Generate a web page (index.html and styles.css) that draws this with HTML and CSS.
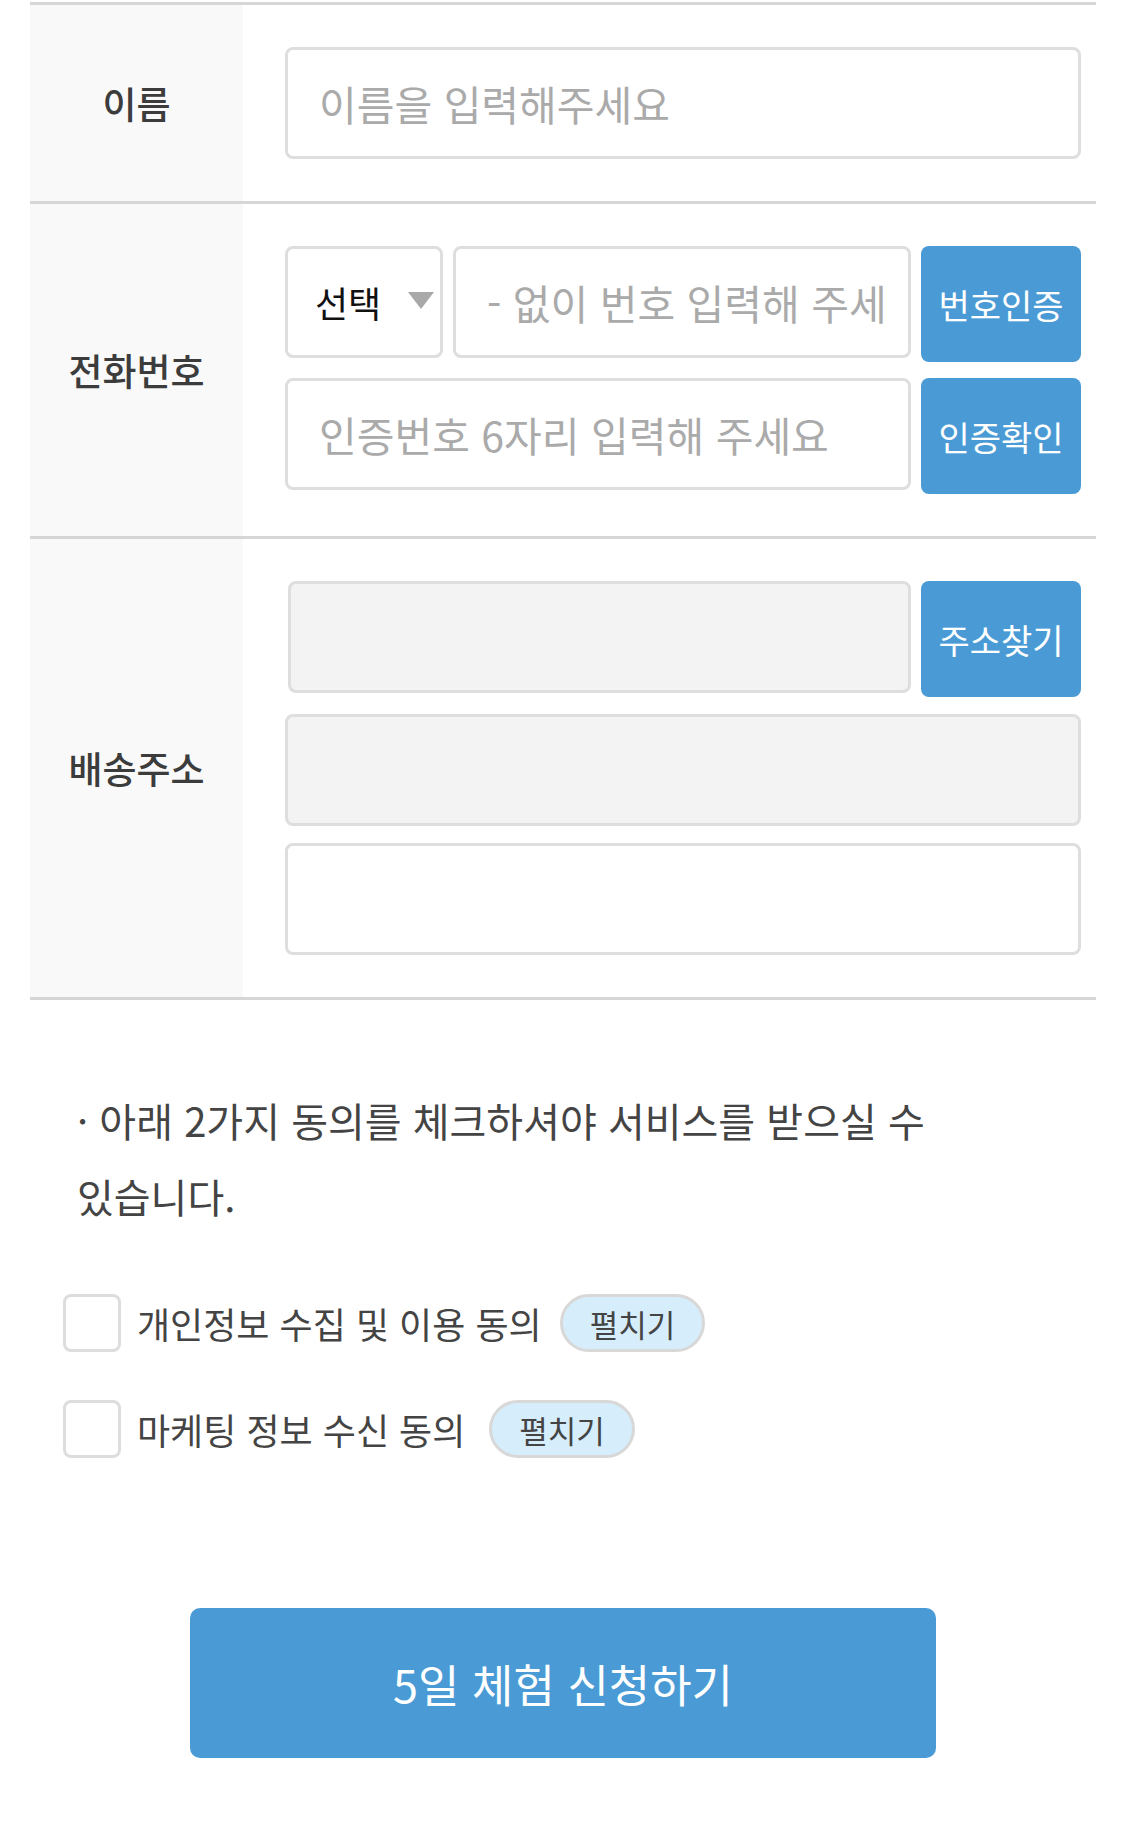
FILE: index.html
```html
<!DOCTYPE html>
<html lang="ko">
<head>
<meta charset="utf-8">
<title>5일 체험 신청</title>
<link rel="stylesheet" href="styles.css">
</head>
<body>
<div class="page">
  <div class="form-table">
    <div class="form-row">
      <div class="label-cell">이름</div>
      <div class="field-cell">
        <input class="field" type="text" placeholder="이름을 입력해주세요">
      </div>
    </div>
    <div class="form-row">
      <div class="label-cell">전화번호</div>
      <div class="field-cell">
        <div class="line">
          <div class="select">
            <span class="select-text">선택</span>
            <svg class="caret" width="26" height="17" viewBox="0 0 26 17"><polygon points="0,0 26,0 13,17" fill="#a9a9a9"/></svg>
          </div>
          <input class="field phone" type="text" placeholder="- 없이 번호 입력해 주세요">
          <button class="btn" type="button">번호인증</button>
        </div>
        <div class="line">
          <input class="field" type="text" placeholder="인증번호 6자리 입력해 주세요">
          <button class="btn" type="button">인증확인</button>
        </div>
      </div>
    </div>
    <div class="form-row">
      <div class="label-cell">배송주소</div>
      <div class="field-cell address">
        <div class="line">
          <input class="field gray zip" type="text" readonly>
          <button class="btn" type="button">주소찾기</button>
        </div>
        <input class="field gray" type="text" readonly>
        <input class="field" type="text">
      </div>
    </div>
  </div>

  <p class="notice">· 아래 2가지 동의를 체크하셔야 서비스를 받으실 수 있습니다.</p>

  <div class="agree-list">
    <div class="agree">
      <span class="check"></span>
      <span class="agree-text">개인정보 수집 및 이용 동의</span>
      <button class="pill" type="button">펼치기</button>
    </div>
    <div class="agree">
      <span class="check"></span>
      <span class="agree-text">마케팅 정보 수신 동의</span>
      <button class="pill wide-gap" type="button">펼치기</button>
    </div>
  </div>

  <div class="submit-wrap">
    <button class="submit" type="button">5일 체험 신청하기</button>
  </div>
</div>
</body>
</html>
```

FILE: styles.css
```css
* {
  box-sizing: border-box;
}

html,
body {
  margin: 0;
  padding: 0;
  background: #ffffff;
}

body {
  width: 1125px;
  font-family: "Noto Sans CJK KR", "Noto Sans", sans-serif;
  color: #444444;
}

.page {
  padding: 2px 29px 0 30px;
}

.form-table {
  border-top: 3px solid #d6d6d6;
}

.form-row {
  display: flex;
  border-bottom: 3px solid #d6d6d6;
}

.label-cell {
  width: 213px;
  flex: none;
  background: #f9f9f9;
  display: flex;
  align-items: center;
  justify-content: center;
  font-size: 37px;
  font-weight: 500;
  color: #3c3c3c;
}

.field-cell {
  flex: 1;
  min-width: 0;
  padding: 42px 15px 42px 42px;
  display: flex;
  flex-direction: column;
  gap: 16px;
}

.field-cell.address {
  gap: 17px;
}

.line {
  display: flex;
  align-items: flex-start;
  gap: 10px;
}

.field {
  display: block;
  width: 100%;
  flex: none;
  height: 112px;
  margin: 0;
  padding: 0 30px 0 31px;
  border: 3px solid #dedede;
  border-radius: 8px;
  background: #ffffff;
  font-family: inherit;
  font-size: 41px;
  color: #333333;
  outline: none;
}

.line .field {
  flex: 1 1 auto;
  width: auto;
  min-width: 0;
}

.field.phone {
  padding-right: 24px;
}

.line .field.zip {
  margin-left: 3px;
}

.field::placeholder {
  color: #aaaaaa;
  opacity: 1;
}

.field.gray {
  background: #f4f3f3;
}

.select {
  width: 158px;
  height: 112px;
  flex: none;
  display: flex;
  align-items: center;
  justify-content: space-between;
  padding: 0 6px 0 27px;
  border: 3px solid #dedede;
  border-radius: 8px;
  background: #ffffff;
}

.select-text {
  font-size: 36px;
  color: #111111;
}

.caret {
  display: block;
  margin-top: -4px;
}

.btn {
  width: 160px;
  height: 116px;
  flex: none;
  margin: 0;
  padding: 0;
  border: 0;
  border-radius: 8px;
  background: #4a9bd5;
  color: #ffffff;
  font-family: inherit;
  font-size: 34px;
}

.notice {
  margin: 82px 0 0;
  padding: 0 60px 0 47px;
  font-size: 40px;
  line-height: 76px;
  color: #444444;
  word-break: keep-all;
}

.agree-list {
  margin-top: 60px;
  padding-left: 33px;
  display: flex;
  flex-direction: column;
  gap: 48px;
}

.agree {
  display: flex;
  align-items: center;
}

.check {
  width: 58px;
  height: 58px;
  flex: none;
  border: 3px solid #dddddd;
  border-radius: 8px;
  background: #ffffff;
}

.agree-text {
  margin-left: 16px;
  font-size: 36px;
  color: #444444;
}

.pill {
  margin: 0 0 0 18px;
  height: 58px;
  padding: 0 27px;
  border: 3px solid #d8d8d8;
  border-radius: 29px;
  background: #d6edfb;
  color: #444444;
  font-family: inherit;
  font-size: 31px;
}

.pill.wide-gap {
  margin-left: 24px;
}

.submit-wrap {
  margin-top: 150px;
  display: flex;
  justify-content: center;
}

.submit {
  width: 746px;
  height: 150px;
  margin: 0;
  padding: 0;
  border: 0;
  border-radius: 10px;
  background: #4a9bd5;
  color: #ffffff;
  font-family: inherit;
  font-size: 45px;
}
```
